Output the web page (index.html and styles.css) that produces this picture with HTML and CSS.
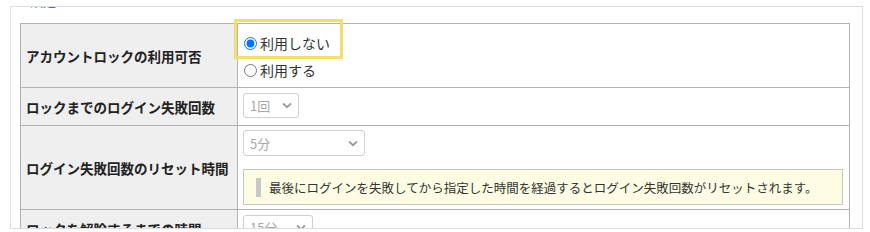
FILE: index.html
```html
<!DOCTYPE html>
<html lang="ja">
<head>
    <meta charset="UTF-8">
    <title>アカウントロック設定</title>
    <link rel="stylesheet" href="styles.css">
</head>
<body>
    <div class="panel">
        <div class="panel-title">設定</div>
        <table class="settings">
            <tr class="row-lock">
                <th>アカウントロックの利用可否</th>
                <td>
                    <div class="option option-first">
                        <span class="highlight"></span>
                        <input type="radio" name="lock" id="lock-off" checked>
                        <label for="lock-off">利用しない</label>
                    </div>
                    <div class="option">
                        <input type="radio" name="lock" id="lock-on">
                        <label for="lock-on">利用する</label>
                    </div>
                </td>
            </tr>
            <tr class="row-count">
                <th>ロックまでのログイン失敗回数</th>
                <td>
                    <div class="select select-count">
                        <span>1回</span>
                        <svg width="10" height="7" viewBox="0 0 10 7"><path d="M1 1.5 L5 5.2 L9 1.5" fill="none" stroke="#9a9a9a" stroke-width="1.8"/></svg>
                    </div>
                </td>
            </tr>
            <tr class="row-reset">
                <th>ログイン失敗回数のリセット時間</th>
                <td>
                    <div class="select select-reset">
                        <span>5分</span>
                        <svg width="10" height="7" viewBox="0 0 10 7"><path d="M1 1.5 L5 5.2 L9 1.5" fill="none" stroke="#9a9a9a" stroke-width="1.8"/></svg>
                    </div>
                    <div class="note">
                        <span class="note-bar"></span>
                        最後にログインを失敗してから指定した時間を経過するとログイン失敗回数がリセットされます。
                    </div>
                </td>
            </tr>
            <tr class="row-unlock">
                <th>ロックを解除するまでの時間</th>
                <td>
                    <div class="select select-unlock">
                        <span>15分</span>
                        <svg width="10" height="7" viewBox="0 0 10 7"><path d="M1 1.5 L5 5.2 L9 1.5" fill="none" stroke="#9a9a9a" stroke-width="1.8"/></svg>
                    </div>
                </td>
            </tr>
        </table>
    </div>
</body>
</html>
```

FILE: styles.css
```css
* {
    margin: 0;
    padding: 0;
    box-sizing: border-box;
    font-family: "Noto Sans CJK JP", "Noto Sans", sans-serif;
}

body {
    background-color: #ffffff;
    color: #333333;
}

.panel {
    margin: 6px 0 0 10px;
    width: 853px;
    height: 223px;
    border: 1px solid #dddddd;
    padding: 0 0 0 9px;
    overflow: hidden;
}

.panel-title {
    margin-top: -14px;
    margin-left: 10px;
    height: 16px;
    line-height: 16px;
    font-size: 13px;
    color: #3b6cc0;
}

.settings {
    margin-top: 14px;
    width: 830px;
    border-collapse: collapse;
}

.settings th,
.settings td {
    border: 1px solid #b3b3b3;
    vertical-align: top;
}

.settings th {
    width: 217px;
    background-color: #efefef;
    text-align: left;
    vertical-align: middle;
    font-size: 13.5px;
    font-weight: bold;
    color: #222222;
    padding: 0 5px;
    line-height: 18px;
}

.settings td {
    padding: 5px 5px 7px;
}

.row-lock td {
    padding: 8px 5px 6px;
    height: 64px;
}

.row-count td {
    height: 37px;
}

.row-reset td {
    padding: 4px 5px 3px;
    height: 84px;
}

.option {
    display: flex;
    align-items: center;
    height: 22px;
    font-size: 14px;
}

.option + .option {
    margin-top: 5px;
}

.option input {
    width: 13px;
    height: 13px;
    margin: 0 3px 0 1px;
}

.option-first {
    position: relative;
}

.highlight {
    position: absolute;
    left: -9px;
    top: -13px;
    width: 109px;
    height: 40px;
    border: 3px solid #f2df6e;
    pointer-events: none;
}

.select {
    display: flex;
    align-items: center;
    justify-content: space-between;
    height: 25px;
    padding: 0 6px;
    border: 1px solid #cfcfcf;
    border-radius: 3px;
    font-size: 13px;
    color: #a8a8a8;
    background-color: #ffffff;
}

.select-count {
    width: 56px;
}

.select-reset {
    width: 122px;
    height: 26px;
}

.select-unlock {
    width: 70px;
}

.note {
    display: flex;
    align-items: center;
    margin-top: 13px;
    width: 600px;
    height: 36px;
    padding: 0 12px;
    border: 1px solid #c6c6c6;
    background-color: #fdfde3;
    font-size: 12.5px;
    color: #333333;
}

.note-bar {
    width: 5px;
    height: 19px;
    margin-right: 8px;
    background-color: #c8c8c8;
}
```
